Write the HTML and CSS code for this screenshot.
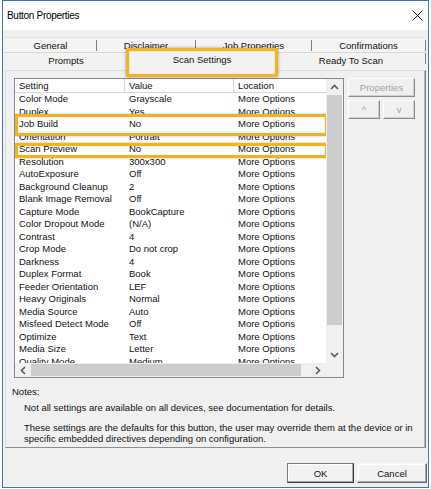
FILE: index.html
```html
<!DOCTYPE html>
<html>
<head>
<meta charset="utf-8">
<title>Button Properties</title>
<link rel="stylesheet" href="styles.css">
</head>
<body>
<div class="window">
  <div class="titlebar">
    <span class="title">Button Properties</span>
    <svg class="close" width="11" height="11" viewBox="0 0 11 11"><path d="M0.5 0.5 L10.5 10.5 M10.5 0.5 L0.5 10.5" stroke="#1a1a1a" stroke-width="1" fill="none"/></svg>
  </div>
  <div class="tabs">
    <div class="tabrow back">
      <div class="tab t1">General</div>
      <div class="tab t2">Disclaimer</div>
      <div class="tab t3">Job Properties</div>
      <div class="tab t4">Confirmations</div>
    </div>
    <div class="tabrow front">
      <div class="tab p1">Prompts</div>
      <div class="tab sel">Scan Settings</div>
      <div class="tab p3">Ready To Scan</div>
    </div>
  </div>
  <div class="panel">
    <div class="top">
      <div class="list">
        <div class="main">
          <div class="view">
            <div class="hdr">
              <div class="c c1">Setting</div>
              <div class="c c2">Value</div>
              <div class="c c3">Location</div>
            </div>
            <div class="row"><div class="c c1">Color Mode</div><div class="c c2">Grayscale</div><div class="c c3">More Options</div></div>
            <div class="row"><div class="c c1">Duplex</div><div class="c c2">Yes</div><div class="c c3">More Options</div></div>
            <div class="row hl hl-a"><div class="c c1">Job Build</div><div class="c c2">No</div><div class="c c3">More Options</div></div>
            <div class="row"><div class="c c1">Orientation</div><div class="c c2">Portrait</div><div class="c c3">More Options</div></div>
            <div class="row hl hl-b"><div class="c c1">Scan Preview</div><div class="c c2">No</div><div class="c c3">More Options</div></div>
            <div class="row"><div class="c c1">Resolution</div><div class="c c2">300x300</div><div class="c c3">More Options</div></div>
            <div class="row"><div class="c c1">AutoExposure</div><div class="c c2">Off</div><div class="c c3">More Options</div></div>
            <div class="row"><div class="c c1">Background Cleanup</div><div class="c c2">2</div><div class="c c3">More Options</div></div>
            <div class="row"><div class="c c1">Blank Image Removal</div><div class="c c2">Off</div><div class="c c3">More Options</div></div>
            <div class="row"><div class="c c1">Capture Mode</div><div class="c c2">BookCapture</div><div class="c c3">More Options</div></div>
            <div class="row"><div class="c c1">Color Dropout Mode</div><div class="c c2">(N/A)</div><div class="c c3">More Options</div></div>
            <div class="row"><div class="c c1">Contrast</div><div class="c c2">4</div><div class="c c3">More Options</div></div>
            <div class="row"><div class="c c1">Crop Mode</div><div class="c c2">Do not crop</div><div class="c c3">More Options</div></div>
            <div class="row"><div class="c c1">Darkness</div><div class="c c2">4</div><div class="c c3">More Options</div></div>
            <div class="row"><div class="c c1">Duplex Format</div><div class="c c2">Book</div><div class="c c3">More Options</div></div>
            <div class="row"><div class="c c1">Feeder Orientation</div><div class="c c2">LEF</div><div class="c c3">More Options</div></div>
            <div class="row"><div class="c c1">Heavy Originals</div><div class="c c2">Normal</div><div class="c c3">More Options</div></div>
            <div class="row"><div class="c c1">Media Source</div><div class="c c2">Auto</div><div class="c c3">More Options</div></div>
            <div class="row"><div class="c c1">Misfeed Detect Mode</div><div class="c c2">Off</div><div class="c c3">More Options</div></div>
            <div class="row"><div class="c c1">Optimize</div><div class="c c2">Text</div><div class="c c3">More Options</div></div>
            <div class="row"><div class="c c1">Media Size</div><div class="c c2">Letter</div><div class="c c3">More Options</div></div>
            <div class="row"><div class="c c1">Quality Mode</div><div class="c c2">Medium</div><div class="c c3">More Options</div></div>
          </div>
          <div class="vscroll">
            <div class="arrow"><svg width="9" height="6" viewBox="0 0 9 6"><path d="M1 5 L4.5 1.5 L8 5" stroke="#5a5a5a" stroke-width="1.6" fill="none"/></svg></div>
            <div class="vtrack"><div class="vthumb"></div></div>
            <div class="arrow"><svg width="9" height="6" viewBox="0 0 9 6"><path d="M1 1 L4.5 4.5 L8 1" stroke="#5a5a5a" stroke-width="1.6" fill="none"/></svg></div>
          </div>
        </div>
        <div class="hbar">
          <div class="hscroll">
            <div class="harrow"><svg width="6" height="9" viewBox="0 0 6 9"><path d="M5 1 L1.5 4.5 L5 8" stroke="#5a5a5a" stroke-width="1.6" fill="none"/></svg></div>
            <div class="htrack"><div class="hthumb"></div></div>
            <div class="harrow"><svg width="6" height="9" viewBox="0 0 6 9"><path d="M1 1 L4.5 4.5 L1 8" stroke="#5a5a5a" stroke-width="1.6" fill="none"/></svg></div>
          </div>
          <div class="corner"></div>
        </div>
      </div>
      <div class="side">
        <button class="btn" disabled>Properties</button>
        <div class="updown">
          <button class="btn" disabled>^</button>
          <button class="btn" disabled>v</button>
        </div>
      </div>
    </div>
    <div class="notes">
      <div class="nlabel">Notes:</div>
      <p class="n1">Not all settings are available on all devices, see documentation for details.</p>
      <p class="n2">These settings are the defaults for this button, the user may override them at the device or in specific embedded directives depending on configuration.</p>
    </div>
  </div>
  <div class="actions">
    <button class="abtn ok">OK</button>
    <button class="abtn cancel">Cancel</button>
  </div>
</div>
</body>
</html>
```
FILE: styles.css
```css
body {
  margin: 0;
  background: #ffffff;
  font-family: "Liberation Sans", Arial, sans-serif;
  font-size: 9.5px;
  color: #111;
}

.window {
  box-sizing: border-box;
  margin-left: 2px;
  width: 427px;
  height: 488px;
  border: 1px solid #4472b8;
  background: #f0f0f0;
  display: flex;
  flex-direction: column;
}

.titlebar {
  flex: none;
  height: 29px;
  background: #fff;
  display: flex;
  align-items: center;
  justify-content: space-between;
  padding: 0 5px 0 4px;
}

.title {
  font-size: 10px;
  letter-spacing: -0.3px;
  color: #000;
}

.close { display: block; }

/* tabs */
.tabs {
  flex: none;
  margin: 7px 2px 0 2px;
}

.tabrow { display: flex; }

.back {
  box-sizing: border-box;
  height: 15px;
  border-top: 1px solid #e2e2e2;
  padding-top: 2px;
  background: #f4f4f4;
}

.back .tab {
  box-sizing: border-box;
  height: 11px;
  line-height: 11px;
  text-align: center;
  border-right: 1px solid #7f7f7f;
  white-space: nowrap;
}

.t1 { width: 92px; }
.t2 { width: 99px; }
.t3 { width: 116px; }
.t4 { width: 114px; }

.front {
  box-sizing: border-box;
  height: 18px;
  border-top: 1px solid #d8d8d8;
  background: #f2f2f2;
}

.front .tab {
  box-sizing: border-box;
  line-height: 16px;
  text-align: center;
  white-space: nowrap;
}

.p1 { width: 122px; }
.p3 {
  width: 149px;
  height: 11px;
  align-self: flex-start;
  border-right: 1px solid #7f7f7f;
}

.front .sel {
  width: 152px;
  margin: -5px -1px -7px;
  border: 3px solid #f0b41c;
  background: #f3f3f3;
  line-height: 18px;
  position: relative;
  z-index: 1;
  box-shadow: 0 0 3px rgba(0, 0, 0, 0.35), inset 0 0 2px rgba(0, 0, 0, 0.15);
}

/* panel */
.panel {
  flex: none;
  box-sizing: border-box;
  height: 378px;
  margin: 0 2px;
  border: 1px solid;
  border-color: #dcdcdc #7a7a7a #8e8e8e #dcdcdc;
  box-shadow: inset -1px 0 #b4b4b4;
  padding-top: 7px;
}

.top {
  display: flex;
  align-items: flex-start;
  gap: 4px;
  margin-left: 8px;
}

.list {
  box-sizing: border-box;
  width: 330px;
  height: 300px;
  border: 1px solid #828790;
  background: #fff;
  display: flex;
  flex-direction: column;
}

.main {
  display: flex;
  height: 284px;
}

.view {
  width: 311px;
  overflow: hidden;
}

.hdr {
  box-sizing: border-box;
  display: flex;
  height: 14px;
  line-height: 13px;
  border-bottom: 1px solid #d5d5d5;
}

.hdr .c {
  border-right: 1px solid #d5d5d5;
}

.row {
  display: flex;
  height: 12.5px;
  line-height: 12.5px;
}

.c {
  box-sizing: border-box;
  flex: none;
  padding-left: 4px;
  white-space: nowrap;
  overflow: hidden;
}

.c1 { width: 110px; }
.c2 { width: 109px; }
.c3 { width: 110px; }

.hl { position: relative; }

.hl::after {
  content: "";
  position: absolute;
  left: 0;
  right: -2px;
  border: 3px solid #f0b41c;
  box-shadow: 0 0 2px rgba(0, 0, 0, 0.3), inset 0 0 2px rgba(0, 0, 0, 0.15);
}

.hl-a::after { top: -4px; bottom: -5.5px; }
.hl-b::after { top: -0.5px; bottom: -2px; }

.vscroll {
  width: 17px;
  background: #f0f0f0;
  display: flex;
  flex-direction: column;
}

.arrow {
  flex: none;
  height: 16px;
  display: flex;
  align-items: center;
  justify-content: center;
}

.vtrack {
  flex: 1;
  padding: 0 1px;
}

.vthumb {
  height: 230px;
  background: #cdcdcd;
}

.hbar {
  display: flex;
  height: 14px;
}

.hscroll {
  width: 311px;
  display: flex;
  background: #f0f0f0;
}

.harrow {
  flex: none;
  width: 16px;
  display: flex;
  align-items: center;
  justify-content: center;
}

.htrack {
  flex: 1;
  padding: 1px 0;
}

.hthumb {
  width: 270px;
  height: 100%;
  background: #cdcdcd;
}

.corner {
  flex: 1;
  background: #f0f0f0;
}

.side {
  width: 67px;
  display: flex;
  flex-direction: column;
  gap: 3px;
}

.btn {
  font: inherit;
  height: 19px;
  padding: 0;
  color: #a3a3a3;
  background: #f0f0f0;
  border: 1px solid;
  border-color: #fdfdfd #8c8c8c #8c8c8c #fdfdfd;
  box-shadow: inset -1px -1px #cfcfcf;
}

.updown {
  display: flex;
  justify-content: space-between;
}

.updown .btn { width: 32px; }

/* notes */
.notes {
  padding-left: 6px;
}

.nlabel {
  margin-top: 8px;
  line-height: 12px;
}

.notes p {
  margin: 0 0 0 12px;
  line-height: 11px;
}

.notes .n1 { margin-top: 3.5px; }
.notes .n2 { margin-top: 9px; }

/* bottom buttons */
.actions {
  flex: none;
  display: flex;
  justify-content: flex-end;
  gap: 3px;
  padding: 15px 1px 0 0;
}

.abtn {
  font: inherit;
  height: 20px;
  padding: 0;
  color: #111;
  background: #f2f2f2;
  border: 1px solid;
  border-color: #f8f8f8 #6a6a6a #6a6a6a #f8f8f8;
  box-shadow: inset -1px -1px #a8a8a8, inset 1px 1px #ffffff;
}

.ok {
  width: 67px;
  border-color: #7a7a7a #3c3c3c #3c3c3c #7a7a7a;
}

.cancel { width: 70px; }
```
